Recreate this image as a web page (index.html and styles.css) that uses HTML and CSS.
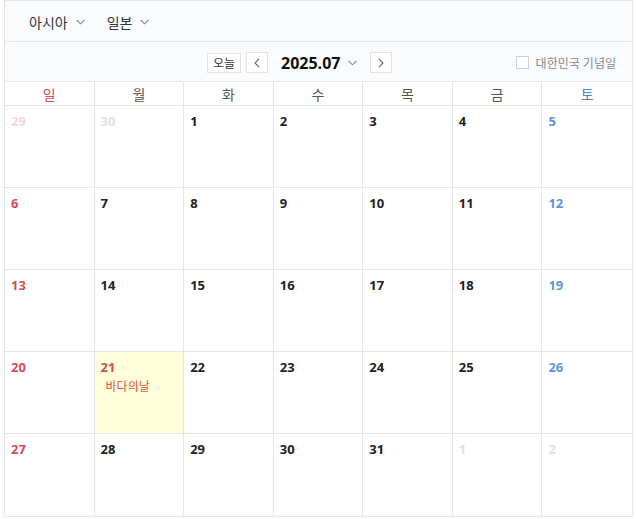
FILE: index.html
```html
<!DOCTYPE html>
<html lang="ko">
<head>
<meta charset="utf-8">
<link rel="stylesheet" href="styles.css">
</head>
<body>
<div class="cal">
  <div class="topbar">
    <div class="sel">아시아 <svg class="chev" width="9" height="6" viewBox="0 0 9 6"><path d="M0.5 0.8 L4.5 4.8 L8.5 0.8" fill="none" stroke="#888" stroke-width="1.1"/></svg></div>
    <div class="sel">일본 <svg class="chev" width="9" height="6" viewBox="0 0 9 6"><path d="M0.5 0.8 L4.5 4.8 L8.5 0.8" fill="none" stroke="#888" stroke-width="1.1"/></svg></div>
  </div>
  <div class="toolbar">
    <div class="nav">
      <button class="today">오늘</button>
      <button class="arrow"><svg width="6" height="10" viewBox="0 0 6 10"><path d="M5 0.8 L1 5 L5 9.2" fill="none" stroke="#666" stroke-width="1.1"/></svg></button>
      <div class="month">2025.07 <svg class="chev" width="9" height="6" viewBox="0 0 9 6"><path d="M0.5 0.8 L4.5 4.8 L8.5 0.8" fill="none" stroke="#888" stroke-width="1.1"/></svg></div>
      <button class="arrow next"><svg width="6" height="10" viewBox="0 0 6 10"><path d="M1 0.8 L5 5 L1 9.2" fill="none" stroke="#666" stroke-width="1.1"/></svg></button>
    </div>
    <label class="check"><span class="box"></span>대한민국 기념일</label>
  </div>
  <div class="grid">
    <div class="dow sun">일</div><div class="dow">월</div><div class="dow">화</div><div class="dow">수</div><div class="dow">목</div><div class="dow">금</div><div class="dow sat">토</div>

    <div class="cell sun other"><span class="d">29</span></div>
    <div class="cell other"><span class="d">30</span></div>
    <div class="cell"><span class="d">1</span></div>
    <div class="cell"><span class="d">2</span></div>
    <div class="cell"><span class="d">3</span></div>
    <div class="cell"><span class="d">4</span></div>
    <div class="cell sat"><span class="d">5</span></div>

    <div class="cell sun"><span class="d">6</span></div>
    <div class="cell"><span class="d">7</span></div>
    <div class="cell"><span class="d">8</span></div>
    <div class="cell"><span class="d">9</span></div>
    <div class="cell"><span class="d">10</span></div>
    <div class="cell"><span class="d">11</span></div>
    <div class="cell sat"><span class="d">12</span></div>

    <div class="cell sun"><span class="d">13</span></div>
    <div class="cell"><span class="d">14</span></div>
    <div class="cell"><span class="d">15</span></div>
    <div class="cell"><span class="d">16</span></div>
    <div class="cell"><span class="d">17</span></div>
    <div class="cell"><span class="d">18</span></div>
    <div class="cell sat"><span class="d">19</span></div>

    <div class="cell sun"><span class="d">20</span></div>
    <div class="cell holiday"><span class="d">21</span><span class="ev">바다의날</span></div>
    <div class="cell"><span class="d">22</span></div>
    <div class="cell"><span class="d">23</span></div>
    <div class="cell"><span class="d">24</span></div>
    <div class="cell"><span class="d">25</span></div>
    <div class="cell sat"><span class="d">26</span></div>

    <div class="cell sun"><span class="d">27</span></div>
    <div class="cell"><span class="d">28</span></div>
    <div class="cell"><span class="d">29</span></div>
    <div class="cell"><span class="d">30</span></div>
    <div class="cell"><span class="d">31</span></div>
    <div class="cell other"><span class="d">1</span></div>
    <div class="cell sat other"><span class="d">2</span></div>
  </div>
</div>
</body>
</html>
```
FILE: styles.css
```css
* { box-sizing: border-box; }
html, body { margin: 0; padding: 0; background: #fff; }
body { font-family: "Open Sans", "Noto Sans CJK KR", sans-serif; color: #222; }

.cal {
  margin-left: 4px;
  width: 629px;
  height: 517px;
  border: 1px solid #e4e6ea;
  display: flex;
  flex-direction: column;
}

.topbar {
  height: 41px;
  background: #f9fbfd;
  border-bottom: 1px solid #e4e6ea;
  display: flex;
  align-items: center;
  padding-left: 24px;
  padding-top: 2px;
  gap: 22px;
}
.sel {
  font-size: 14px;
  color: #333;
  display: flex;
  align-items: center;
  gap: 8px;
}

.toolbar {
  height: 41px;
  background: #f9fbfd;
  border-bottom: 1px solid #e4e6ea;
  display: flex;
  align-items: center;
  padding-top: 3px;
}
.nav {
  display: flex;
  align-items: center;
  margin-left: 202px;
}
button {
  font-family: inherit;
  background: #fff;
  border: 1px solid #e2e2e2;
  padding: 0;
  display: flex;
  align-items: center;
  justify-content: center;
  cursor: pointer;
}
.today {
  width: 34px;
  height: 20px;
  font-size: 12px;
  color: #333;
}
.arrow {
  width: 22px;
  height: 21px;
  margin-left: 5px;
}
.month {
  font-size: 16px;
  font-weight: 700;
  color: #111;
  margin-left: 13px;
  display: flex;
  align-items: center;
  gap: 8px;
}
.arrow.next { margin-left: 13px; }

.check {
  margin-left: auto;
  margin-right: 16px;
  display: flex;
  align-items: center;
  font-size: 12px;
  color: #8a8a8a;
  gap: 7px;
}
.box {
  width: 13px;
  height: 13px;
  border: 1px solid #cfcfcf;
  background: #fff;
}

.grid {
  flex: 1;
  display: grid;
  grid-template-columns: repeat(7, 1fr);
  grid-template-rows: 24px repeat(5, 82px);
}
.dow, .cell {
  border-right: 1px solid #e6e6e6;
  border-bottom: 1px solid #e6e6e6;
}
.dow:nth-child(7n), .cell:nth-child(7n) { border-right: none; }
.cell:nth-last-child(-n+7) { border-bottom: none; }

.dow {
  font-size: 14px;
  color: #555;
  display: flex;
  align-items: center;
  justify-content: center;
  font-family: "Noto Sans CJK KR", sans-serif;
}
.dow.sun { color: #d64b55; }
.dow.sat { color: #4a86c8; }

.cell {
  padding: 7px 6px;
  display: flex;
  flex-direction: column;
  align-items: flex-start;
}
.d {
  font-size: 13px;
  font-weight: 700;
  color: #222;
  line-height: 16px;
}
.cell.sun .d { color: #d64b55; }
.cell.sat .d { color: #5b97d6; }
.cell.other .d { color: #e2e2e2; }
.cell.sun.other .d { color: #f6d6d9; }
.cell.sat.other .d { color: #e2e2e2; }

.holiday { background: #ffffdb; }
.holiday .d { color: #d64b55; }
.ev {
  font-size: 12px;
  color: #d9534f;
  margin-left: 5px;
  margin-top: 2px;
  font-family: "Noto Sans CJK KR", sans-serif;
}
```
